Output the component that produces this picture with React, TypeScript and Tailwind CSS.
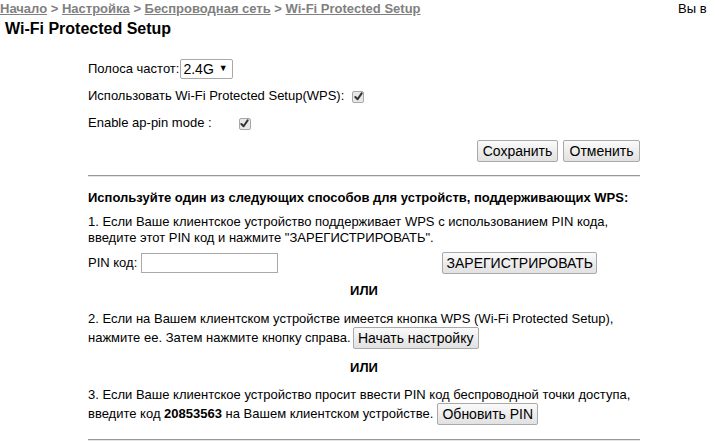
import React from "react";

function Check() {
  return (
    <span className="inline-flex h-[12px] w-[12px] items-center justify-center rounded-[2px] border border-[#a8a8a8] bg-[#e8e8e8] align-middle">
      <svg width="9" height="9" viewBox="0 0 10 10">
        <path d="M1.5 5.5 L4 8 L8.5 1.5" fill="none" stroke="#333" strokeWidth="2.2" strokeLinecap="round" strokeLinejoin="round" />
      </svg>
    </span>
  );
}

function Btn({ children, className = "" }: { children: React.ReactNode; className?: string }) {
  return (
    <button
      className={
        "inline-flex h-[22px] shrink-0 items-center justify-center whitespace-nowrap rounded-[2px] border border-[#a9a9a9] bg-gradient-to-b from-[#fafafa] to-[#e1e1e1] px-[6px] text-[14px] leading-none text-black " +
        className
      }
    >
      {children}
    </button>
  );
}

export default function App() {
  return (
    <div className="h-[443px] w-[719px] overflow-hidden bg-white text-[13px] text-black" style={{ fontFamily: '"Liberation Sans", Arial, sans-serif' }}>
      <div className="flex h-[17px] items-center whitespace-nowrap">
        <div className="w-[678px] shrink-0 text-[13px] font-bold text-[#808080]">
          <span className="underline">Начало</span>
          <span> &gt; </span>
          <span className="underline">Настройка</span>
          <span> &gt; </span>
          <span className="underline">Беспроводная сеть</span>
          <span> &gt; </span>
          <span className="underline">Wi-Fi Protected Setup</span>
        </div>
        <div className="shrink-0 text-[13px] text-black">Вы в</div>
      </div>
      <div className="mt-[3px] h-[18px] pl-[5px] text-[16px] font-bold leading-[18px]">Wi-Fi Protected Setup</div>

      <div className="ml-[88px] w-[552px]">
        <div className="mt-[21px] flex h-[20px] items-center">
          <span>Полоса частот:</span>
          <span className="ml-[1px] inline-flex h-[20px] items-center rounded-[2px] border border-[#a9a9a9] bg-white pl-[2px] pr-[4px] text-[14px]">
            2.4G
            <span className="ml-[5px] text-[9px]">▼</span>
          </span>
        </div>
        <div className="mt-[8px] flex h-[18px] items-center">
          <span>Использовать Wi-Fi Protected Setup(WPS):</span>
          <span className="ml-[8px]"><Check /></span>
        </div>
        <div className="mt-[9px] flex h-[18px] items-center">
          <span>Enable ap-pin mode :</span>
          <span className="ml-[27px]"><Check /></span>
        </div>
        <div className="mt-[8px] flex justify-end gap-[5px]">
          <Btn className="w-[81px]">Сохранить</Btn>
          <Btn className="w-[77px]">Отменить</Btn>
        </div>
        <div className="mt-[13px] h-[2px] border-t border-b border-t-[#999] border-b-[#e6e6e6]" />

        <div className="mt-[13px] h-[16px] font-bold leading-[16px]">Используйте один из следующих способов для устройств, поддерживающих WPS:</div>
        <div className="mt-[8px] leading-[16px]">
          1. Если Ваше клиентское устройство поддерживает WPS с использованием PIN кода,<br />
          введите этот PIN код и нажмите "ЗАРЕГИСТРИРОВАТЬ".
        </div>
        <div className="mt-[6px] flex h-[21px] items-center">
          <span>PIN код:</span>
          <span className="ml-[4px] h-[20px] w-[137px] border border-[#a9a9a9] bg-white" />
          <Btn className="ml-[164px] w-[155px]">ЗАРЕГИСТРИРОВАТЬ</Btn>
        </div>
        <div className="mt-[10px] text-center font-bold leading-[16px]">ИЛИ</div>
        <div className="mt-[12px] leading-[16px]">
          2. Если на Вашем клиентском устройстве имеется кнопка WPS (Wi-Fi Protected Setup),
        </div>
        <div className="flex h-[22px] items-center">
          <span>нажмите ее. Затем нажмите кнопку справа.</span>
          <Btn className="ml-[2px] w-[126px]">Начать настройку</Btn>
        </div>
        <div className="mt-[11px] text-center font-bold leading-[16px]">ИЛИ</div>
        <div className="mt-[11px] leading-[16px]">
          3. Если Ваше клиентское устройство просит ввести PIN код беспроводной точки доступа,
        </div>
        <div className="flex h-[22px] items-center">
          <span>введите код <b>20853563</b> на Вашем клиентском устройстве.</span>
          <Btn className="ml-[4px] w-[101px]">Обновить PIN</Btn>
        </div>
        <div className="mt-[14px] h-[2px] border-t border-b border-t-[#999] border-b-[#e6e6e6]" />
      </div>
    </div>
  );
}
